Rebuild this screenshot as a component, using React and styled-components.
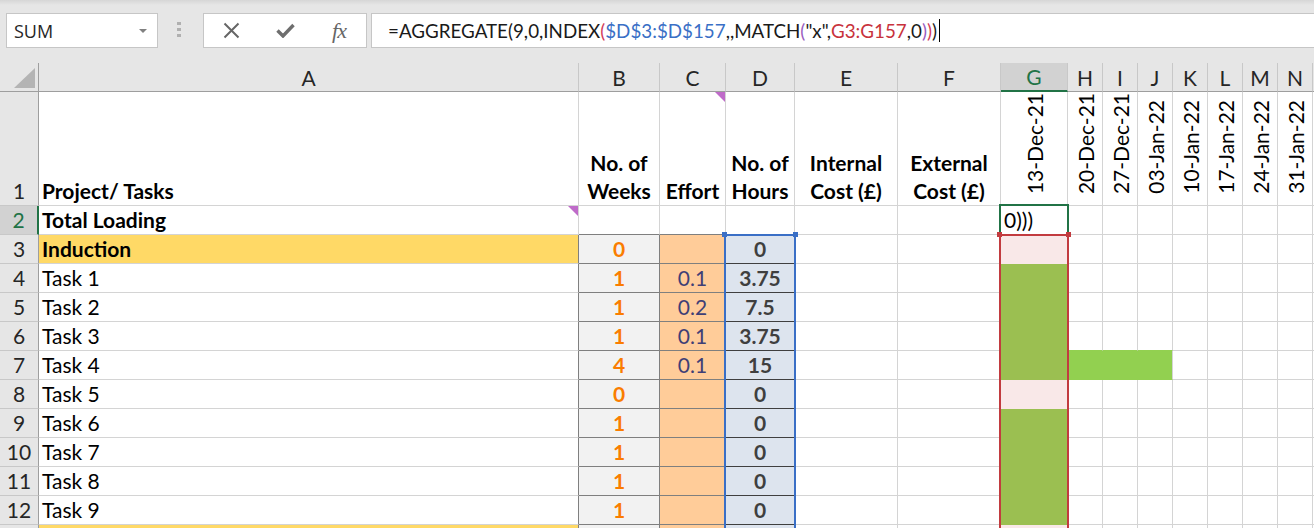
import React from 'react';
import styled, { createGlobalStyle } from 'styled-components';

const GlobalStyle = createGlobalStyle`
  html, body {
    margin: 0;
    padding: 0;
    background: #ffffff;
    overflow: hidden;
  }
  body {
    font-family: Lato, 'Liberation Sans', sans-serif;
    color: #000;
  }
`;

const Window = styled.div`
  width: 1314px;
  height: 528px;
  display: flex;
  flex-direction: column;
  overflow: hidden;
`;

/* ---------- formula bar ---------- */

const Toolbar = styled.div`
  flex: none;
  height: 63px;
  box-sizing: border-box;
  padding: 13px 0 0 6px;
  display: flex;
  align-items: flex-start;
  background: linear-gradient(#d6d6d6 0, #e6e6e6 5px);
`;

const NameBox = styled.div`
  width: 152px;
  height: 35px;
  box-sizing: border-box;
  border: 1px solid #c6c6c6;
  background: #fff;
  display: flex;
  align-items: center;
  justify-content: space-between;
  padding: 0 10px 0 7px;
  font-family: 'Open Sans', sans-serif;
  font-size: 18px;
  color: #262626;
`;

const Caret = styled.span`
  width: 0;
  height: 0;
  border-left: 4px solid transparent;
  border-right: 4px solid transparent;
  border-top: 4px solid #808080;
`;

const Grip = styled.div`
  width: 4px;
  margin: 9px 22px 0 19px;
  display: flex;
  flex-direction: column;
  gap: 3px;

  span {
    width: 4px;
    height: 3px;
    background: #b0b0b0;
  }
`;

const FxButtons = styled.div`
  width: 164px;
  height: 35px;
  box-sizing: border-box;
  border: 1px solid #c6c6c6;
  background: #fff;
  display: grid;
  grid-template-columns: repeat(3, 54px);
  align-items: center;
  justify-items: center;
  margin-right: 4px;
  color: #666;
`;

const FxGlyph = styled.span`
  font-family: 'Liberation Serif', serif;
  font-style: italic;
  font-size: 22px;
  color: #666;
  letter-spacing: -1px;
`;

const FormulaBox = styled.div`
  flex: 1;
  height: 35px;
  box-sizing: border-box;
  border: 1px solid #c6c6c6;
  border-right: none;
  background: #fff;
  display: flex;
  align-items: center;
  padding-left: 16px;
  font-size: 18.8px;
  color: #1a1a1a;
  white-space: nowrap;
`;

const Token = styled.span`
  color: ${p => p.$color || '#1a1a1a'};
`;

const TextCursor = styled.span`
  width: 1px;
  height: 23px;
  margin-left: 2px;
  background: #000;
`;

/* ---------- sheet ---------- */

const Sheet = styled.div`
  flex: 1;
  min-height: 0;
  display: grid;
  grid-template-columns: 39px 540px 81px 66px 69px 103px 103px 67px repeat(7, 35px) 1fr;
  grid-template-rows: 29px 114px repeat(12, 29px);
  overflow: hidden;
  font-size: 21px;
`;

const Corner = styled.div`
  grid-row: 1;
  grid-column: 1;
  position: relative;
  box-sizing: border-box;
  background: #e6e6e6;
  border-right: 1px solid #9e9e9e;
  border-bottom: 1px solid #9e9e9e;
`;

const CornerMark = styled.span`
  position: absolute;
  right: 3px;
  bottom: 3px;
  width: 21px;
  height: 20px;
  background: #b4b4b4;
  clip-path: polygon(100% 0, 100% 100%, 0 100%);
`;

const ColHead = styled.div`
  grid-row: 1;
  grid-column: ${p => p.$c};
  box-sizing: border-box;
  display: flex;
  align-items: center;
  justify-content: center;
  line-height: 28px;
  padding-top: 1px;
  background: ${p => (p.$active ? '#d2d2d2' : '#e6e6e6')};
  color: ${p => (p.$active ? '#217346' : '#262626')};
  border-right: 1px solid #c8c8c8;
  border-bottom: ${p => (p.$active ? '2px solid #217346' : '1px solid #9e9e9e')};
`;

const RowHead = styled.div`
  grid-row: ${p => p.$r};
  grid-column: 1;
  box-sizing: border-box;
  display: flex;
  align-items: flex-end;
  justify-content: center;
  padding-bottom: 2px;
  line-height: 24px;
  background: ${p => (p.$active ? '#d2d2d2' : '#e6e6e6')};
  color: ${p => (p.$active ? '#217346' : '#262626')};
  border-right: ${p => (p.$active ? '2px solid #217346' : '1px solid #9e9e9e')};
  border-bottom: 1px solid #c8c8c8;
`;

const Cell = styled.div`
  grid-row: ${p => p.$r};
  grid-column: ${p => p.$c};
  position: relative;
  box-sizing: border-box;
  display: flex;
  align-items: flex-end;
  justify-content: ${p => (p.$center ? 'center' : 'flex-start')};
  text-align: ${p => (p.$center ? 'center' : 'left')};
  padding: 0 3px 2px;
  line-height: 24px;
  white-space: nowrap;
  background: ${p => p.$fill || '#fff'};
  color: ${p => p.$color || '#000'};
  font-weight: ${p => (p.$bold ? 700 : 400)};
  border-right: 1px solid ${p => p.$right || p.$edge || '#d4d4d4'};
  border-bottom: 1px solid ${p => p.$bottom || p.$edge || '#d4d4d4'};
`;

const HeadLabel = styled(Cell)`
  line-height: 28px;
  padding-bottom: 0;
  white-space: pre-line;
`;

const DateCell = styled(Cell)`
  justify-content: center;
  padding: 0 0 11px;
`;

const Vertical = styled.span`
  writing-mode: vertical-rl;
  transform: rotate(180deg);
  line-height: 1;
`;

const Note = styled.span`
  position: absolute;
  top: 0;
  right: 0;
  width: 10px;
  height: 10px;
  background: #bf6bc9;
  clip-path: polygon(0 0, 100% 0, 100% 100%);
`;

const RangeBox = styled.div`
  grid-column: ${p => p.$c};
  grid-row: ${p => p.$r} / -1;
  position: relative;
  z-index: 3;
  margin: -1px -1px 0 -2px;
  border: 2px solid ${p => p.$color};
  border-bottom: none;
  pointer-events: none;

  &::before,
  &::after {
    content: '';
    position: absolute;
    top: -4px;
    width: 5px;
    height: 5px;
    background: ${p => p.$color};
  }
  &::before {
    left: -4px;
  }
  &::after {
    right: -4px;
  }
`;

const ActiveBox = styled.div`
  grid-column: 8;
  grid-row: 3;
  z-index: 2;
  margin: -2px -1px -1px -2px;
  border: 2px solid #217346;
  pointer-events: none;
`;

const LETTERS = ['A', 'B', 'C', 'D', 'E', 'F', 'G', 'H', 'I', 'J', 'K', 'L', 'M', 'N', ''];

const HEADINGS = [
  { c: 3, text: 'No. of\nWeeks' },
  { c: 4, text: 'Effort', note: true },
  { c: 5, text: 'No. of\nHours' },
  { c: 6, text: 'Internal\nCost (£)' },
  { c: 7, text: 'External\nCost (£)' },
];

const DATES = ['13-Dec-21', '20-Dec-21', '27-Dec-21', '03-Jan-22', '10-Jan-22', '17-Jan-22', '24-Jan-22', '31-Jan-22'];

// row 13 only peeks in at the bottom edge, so it carries no label
const TASKS = [
  { n: 3, a: 'Induction', head: true, b: '0', c: '', d: '0', g: 'pink' },
  { n: 4, a: 'Task 1', b: '1', c: '0.1', d: '3.75', g: 'green' },
  { n: 5, a: 'Task 2', b: '1', c: '0.2', d: '7.5', g: 'green' },
  { n: 6, a: 'Task 3', b: '1', c: '0.1', d: '3.75', g: 'green', next: true },
  { n: 7, a: 'Task 4', b: '4', c: '0.1', d: '15', g: 'green', bar: true },
  { n: 8, a: 'Task 5', b: '0', c: '', d: '0', g: 'pink' },
  { n: 9, a: 'Task 6', b: '1', c: '', d: '0', g: 'green' },
  { n: 10, a: 'Task 7', b: '1', c: '', d: '0', g: 'green' },
  { n: 11, a: 'Task 8', b: '1', c: '', d: '0', g: 'green' },
  { n: 12, a: 'Task 9', b: '1', c: '', d: '0', g: 'green' },
  { n: 13, a: '', head: true, b: '', c: '', d: '', g: 'pink', hidden: true },
];

const FILL = { green: '#9bbf51', pink: '#f9e8e8' };
const BAR = '#92d050';
const CALC_BORDER = '#7f7f7f';

function TaskRow({ t }) {
  const r = t.n + 1;
  return (
    <>
      <RowHead $r={r}>{t.hidden ? '' : t.n}</RowHead>
      <Cell $r={r} $c={2} $bold={t.head} $fill={t.head ? '#ffd966' : undefined} $right={CALC_BORDER}>
        {t.a}
      </Cell>
      <Cell $r={r} $c={3} $center $bold $fill="#f2f2f2" $color="#fa7d00" $edge={CALC_BORDER}>
        {t.b}
      </Cell>
      <Cell $r={r} $c={4} $center $fill="#ffcc99" $color="#3f3f76" $edge={CALC_BORDER}>
        {t.c}
      </Cell>
      <Cell $r={r} $c={5} $center $bold $fill="#dde4ee" $color="#3f3f3f" $bottom="#3f3f3f">
        {t.d}
      </Cell>
      <Cell $r={r} $c={6} />
      <Cell $r={r} $c={7} />
      <Cell $r={r} $c={8} $fill={FILL[t.g]} $edge={FILL[t.g]} />
      {[9, 10, 11, 12, 13, 14, 15, 16].map(c => {
        const inBar = t.bar && c <= 11;
        return (
          <Cell
            key={c}
            $r={r}
            $c={c}
            $fill={inBar ? BAR : undefined}
            $right={inBar && c < 11 ? BAR : undefined}
            $bottom={inBar || (t.next && c <= 11) ? BAR : undefined}
          />
        );
      })}
    </>
  );
}

export default function App() {
  return (
    <Window>
      <GlobalStyle />
      <Toolbar>
        <NameBox>
          SUM
          <Caret />
        </NameBox>
        <Grip>
          <span />
          <span />
          <span />
        </Grip>
        <FxButtons>
          <svg width="17" height="17" viewBox="0 0 17 17">
            <path d="M1.5 1.5 L15.5 15.5 M15.5 1.5 L1.5 15.5" stroke="#666" strokeWidth="2" fill="none" />
          </svg>
          <svg width="19" height="15" viewBox="0 0 19 15">
            <path d="M1.5 7.5 L7 13 L17.5 2" stroke="#6e6e6e" strokeWidth="3.4" fill="none" />
          </svg>
          <FxGlyph>fx</FxGlyph>
        </FxButtons>
        <FormulaBox>
          <Token>=AGGREGATE(9,0,INDEX</Token>
          <Token $color="#d23c5a">(</Token>
          <Token $color="#3a6fc6">$D$3:$D$157</Token>
          <Token>,,MATCH</Token>
          <Token $color="#9a5cc0">(</Token>
          <Token>"x",</Token>
          <Token $color="#c8323c">G3:G157</Token>
          <Token>,0</Token>
          <Token $color="#9a5cc0">)</Token>
          <Token $color="#d23c5a">)</Token>
          <Token>)</Token>
          <TextCursor />
        </FormulaBox>
      </Toolbar>

      <Sheet>
        <Corner>
          <CornerMark />
        </Corner>
        {LETTERS.map((l, i) => (
          <ColHead key={i} $c={i + 2} $active={l === 'G'}>
            {l}
          </ColHead>
        ))}

        {/* row 1: headings */}
        <RowHead $r={2}>1</RowHead>
        <Cell $r={2} $c={2} $bold>
          Project/ Tasks
        </Cell>
        {HEADINGS.map(h => (
          <HeadLabel key={h.c} $r={2} $c={h.c} $center $bold>
            {h.text}
            {h.note && <Note />}
          </HeadLabel>
        ))}
        {DATES.map((d, i) => (
          <DateCell key={d} $r={2} $c={8 + i}>
            <Vertical>{d}</Vertical>
          </DateCell>
        ))}
        <Cell $r={2} $c={16} />

        {/* row 2: totals */}
        <RowHead $r={3} $active>
          2
        </RowHead>
        <Cell $r={3} $c={2} $bold>
          Total Loading
          <Note />
        </Cell>
        <Cell $r={3} $c={3} $bottom={CALC_BORDER} />
        <Cell $r={3} $c={4} $bottom={CALC_BORDER} />
        <Cell $r={3} $c={5} $bottom="#3f3f3f" />
        <Cell $r={3} $c={6} />
        <Cell $r={3} $c={7} />
        <Cell $r={3} $c={8}>0)))</Cell>
        {[9, 10, 11, 12, 13, 14, 15, 16].map(c => (
          <Cell key={c} $r={3} $c={c} />
        ))}

        {TASKS.map(t => (
          <TaskRow key={t.n} t={t} />
        ))}

        <ActiveBox />
        <RangeBox $c={5} $r={4} $color="#3a6fc6" />
        <RangeBox $c={8} $r={4} $color="#c23b3f" />
      </Sheet>
    </Window>
  );
}
